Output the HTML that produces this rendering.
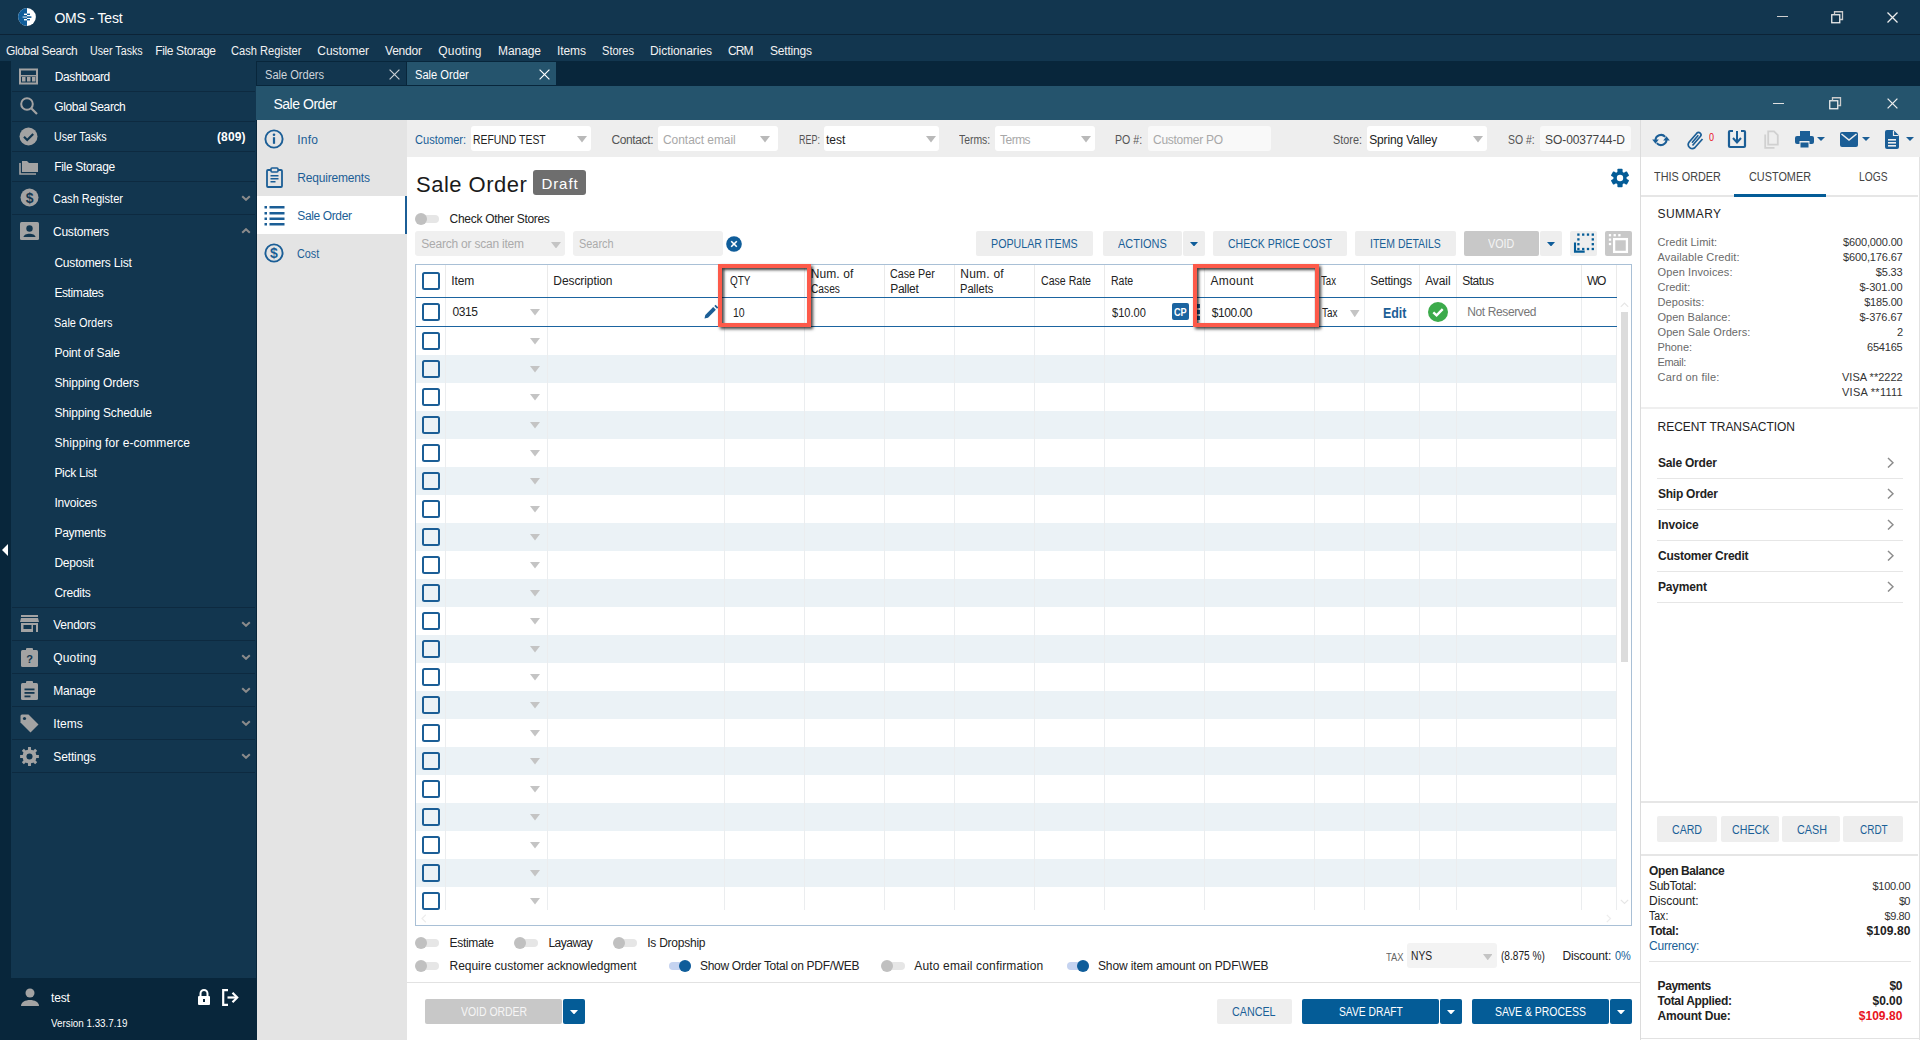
<!DOCTYPE html><html><head><meta charset="utf-8"><style>
*{margin:0;padding:0;box-sizing:border-box}
html,body{width:1920px;height:1040px;overflow:hidden;background:#fff;font-family:"Liberation Sans",sans-serif}
.r{position:absolute}
.t{position:absolute;white-space:nowrap;line-height:20px}
</style></head><body>
<div class="r" style="left:0px;top:0px;width:1920px;height:34px;background:#12364f;"></div>
<div class="r" style="left:0px;top:34px;width:1920px;height:1px;background:#0c2336;"></div>
<div class="r" style="left:0px;top:35px;width:1920px;height:26px;background:#12364f;"></div>
<svg class="r" style="left:17px;top:7px;" width="20" height="20" viewBox="0 0 20 20"><circle cx="10" cy="10" r="8.9" fill="#fff"/><path d="M10 1.1 A8.9 8.9 0 0 0 10 18.9 Z" fill="#0f5d9a"/><rect x="7" y="6.6" width="3" height="1.4" fill="#fff"/><rect x="10" y="6.6" width="3" height="1.4" fill="#0f5d9a"/><rect x="5.6" y="9.3" width="4.4" height="1.6" fill="#9dbcd4"/><rect x="10" y="9.3" width="4.4" height="1.6" fill="#0f5d9a"/><rect x="7" y="12" width="3" height="1.4" fill="#fff"/><rect x="10" y="12" width="3" height="1.4" fill="#0f5d9a"/></svg>
<div class="t " style="left:54.40px;top:8px;font-size:14px;color:#fff;font-weight:normal;letter-spacing:-0.172px;">OMS - Test</div>
<div class="r" style="left:1777px;top:16px;width:11px;height:1.3px;background:#cfcfcf;"></div>
<svg class="r" style="left:1831px;top:11px;" width="13" height="13" viewBox="0 0 13 13"><rect x="0.75" y="3.75" width="8" height="8" fill="none" stroke="#eee" stroke-width="1.3"/><path d="M3.5 3.5 V0.75 H11.5 V8.5 H9" fill="none" stroke="#ccc" stroke-width="1.3"/></svg>
<svg class="r" style="left:1887px;top:12px;" width="11" height="11" viewBox="0 0 11 11"><path d="M0.5 0.5 L10.5 10.5 M10.5 0.5 L0.5 10.5" stroke="#eee" stroke-width="1.3"/></svg>
<div class="t " style="left:6.00px;top:41px;font-size:12px;color:#f2f2f2;font-weight:normal;letter-spacing:-0.362px;">Global Search</div>
<div class="t " style="left:90.30px;top:41px;font-size:12px;color:#f2f2f2;font-weight:normal;transform:scaleX(0.8910);transform-origin:0 0;">User Tasks</div>
<div class="t " style="left:155.20px;top:41px;font-size:12px;color:#f2f2f2;font-weight:normal;letter-spacing:-0.355px;">File Storage</div>
<div class="t " style="left:230.50px;top:41px;font-size:12px;color:#f2f2f2;font-weight:normal;transform:scaleX(0.9270);transform-origin:0 0;">Cash Register</div>
<div class="t " style="left:317.30px;top:41px;font-size:12px;color:#f2f2f2;font-weight:normal;letter-spacing:-0.043px;">Customer</div>
<div class="t " style="left:385.00px;top:41px;font-size:12px;color:#f2f2f2;font-weight:normal;letter-spacing:-0.210px;">Vendor</div>
<div class="t " style="left:438.30px;top:41px;font-size:12px;color:#f2f2f2;font-weight:normal;letter-spacing:0.192px;">Quoting</div>
<div class="t " style="left:498.00px;top:41px;font-size:12px;color:#f2f2f2;font-weight:normal;letter-spacing:-0.070px;">Manage</div>
<div class="t " style="left:557.00px;top:41px;font-size:12px;color:#f2f2f2;font-weight:normal;letter-spacing:-0.088px;">Items</div>
<div class="t " style="left:602.00px;top:41px;font-size:12px;color:#f2f2f2;font-weight:normal;transform:scaleX(0.9222);transform-origin:0 0;">Stores</div>
<div class="t " style="left:650.00px;top:41px;font-size:12px;color:#f2f2f2;font-weight:normal;letter-spacing:-0.064px;">Dictionaries</div>
<div class="t " style="left:728.00px;top:41px;font-size:12px;color:#f2f2f2;font-weight:normal;letter-spacing:-0.875px;">CRM</div>
<div class="t " style="left:770.00px;top:41px;font-size:12px;color:#f2f2f2;font-weight:normal;letter-spacing:-0.193px;">Settings</div>
<div class="r" style="left:0px;top:61px;width:11px;height:979px;background:#08263b;"></div>
<svg class="r" style="left:2px;top:544px;" width="6" height="12" viewBox="0 0 6 12"><path d="M6 0 L0 6 L6 12 Z" fill="#fff"/></svg>
<div class="r" style="left:11px;top:61px;width:245px;height:917px;background:#12364f;"></div>
<div class="r" style="left:11px;top:978px;width:245px;height:62px;background:#08263b;"></div>
<div class="r" style="left:12px;top:91px;width:243px;height:1px;background:#0d2a40;"></div>
<div class="t " style="left:54.80px;top:67px;font-size:12px;color:#fff;font-weight:normal;letter-spacing:-0.412px;">Dashboard</div>
<div class="r" style="left:12px;top:121px;width:243px;height:1px;background:#0d2a40;"></div>
<div class="t " style="left:54.30px;top:97px;font-size:12px;color:#fff;font-weight:normal;letter-spacing:-0.379px;">Global Search</div>
<div class="r" style="left:12px;top:151px;width:243px;height:1px;background:#0d2a40;"></div>
<div class="t " style="left:54.30px;top:127px;font-size:12px;color:#fff;font-weight:normal;transform:scaleX(0.8910);transform-origin:0 0;">User Tasks</div>
<div class="r" style="left:12px;top:181px;width:243px;height:1px;background:#0d2a40;"></div>
<div class="t " style="left:54.30px;top:157px;font-size:12px;color:#fff;font-weight:normal;letter-spacing:-0.345px;">File Storage</div>
<div class="r" style="left:12px;top:214px;width:243px;height:1px;background:#0d2a40;"></div>
<div class="t " style="left:53.00px;top:189px;font-size:12px;color:#fff;font-weight:normal;transform:scaleX(0.9204);transform-origin:0 0;">Cash Register</div>
<div class="t " style="left:53.00px;top:222px;font-size:12px;color:#fff;font-weight:normal;letter-spacing:-0.238px;">Customers</div>
<svg class="r" style="left:19px;top:68px;" width="20" height="18" viewBox="0 0 20 18"><rect x="1" y="1.5" width="17" height="14" fill="none" stroke="#a3a3a3" stroke-width="2"/><rect x="3" y="9" width="3.5" height="4.5" fill="#a3a3a3"/><rect x="8" y="9" width="3.5" height="4.5" fill="#a3a3a3"/><rect x="13" y="9" width="3.5" height="4.5" fill="#a3a3a3"/><rect x="2" y="7" width="15" height="1.5" fill="#a3a3a3"/></svg>
<svg class="r" style="left:19px;top:96px;" width="20" height="20" viewBox="0 0 20 20"><circle cx="8" cy="8" r="5.8" fill="none" stroke="#a3a3a3" stroke-width="2"/><path d="M12.2 12.2 L18 18" stroke="#a3a3a3" stroke-width="2.2"/></svg>
<svg class="r" style="left:19px;top:127px;" width="20" height="20" viewBox="0 0 20 20"><circle cx="9.5" cy="9.5" r="9" fill="#a3a3a3"/><path d="M5 9.8 L8.2 13 L14.2 7" fill="none" stroke="#12364f" stroke-width="2.2"/></svg>
<div class="t" style="right:1674.38px;top:127px;font-size:12px;color:#fff;font-weight:bold;letter-spacing:0.125px;">(809)</div>
<svg class="r" style="left:19px;top:158px;" width="20" height="17" viewBox="0 0 20 17"><path d="M3 3 H8 L10 5 H19 V14 H3 Z" fill="#a3a3a3"/><path d="M1 5 V16 H17" fill="none" stroke="#a3a3a3" stroke-width="1.6"/></svg>
<svg class="r" style="left:20px;top:188px;" width="20" height="20" viewBox="0 0 20 20"><circle cx="9.5" cy="9.5" r="9" fill="#a3a3a3"/><text x="9.6" y="15" font-size="14" font-weight="bold" text-anchor="middle" fill="#12364f" font-family="Liberation Sans">$</text></svg>
<svg class="r" style="left:241px;top:195px;" width="10" height="6" viewBox="0 0 10 6"><path d="M1.2 1.2 L5 4.8 L8.8 1.2" fill="none" stroke="#8b8b8b" stroke-width="2"/></svg>
<svg class="r" style="left:20px;top:222px;" width="19" height="19" viewBox="0 0 19 19"><rect x="0" y="0" width="19" height="18" rx="1.5" fill="#a3a3a3"/><circle cx="9.5" cy="6.5" r="3.2" fill="#12364f"/><path d="M3.5 15 C4 10.5 15 10.5 15.5 15 Z" fill="#12364f"/></svg>
<svg class="r" style="left:241px;top:228px;" width="10" height="6" viewBox="0 0 10 6"><path d="M1.2 4.8 L5 1.2 L8.8 4.8" fill="none" stroke="#8b8b8b" stroke-width="2"/></svg>
<div class="t " style="left:54.40px;top:253px;font-size:12px;color:#fff;font-weight:normal;letter-spacing:-0.196px;">Customers List</div>
<div class="t " style="left:54.40px;top:283px;font-size:12px;color:#fff;font-weight:normal;letter-spacing:-0.400px;">Estimates</div>
<div class="t " style="left:54.40px;top:313px;font-size:12px;color:#fff;font-weight:normal;transform:scaleX(0.9118);transform-origin:0 0;">Sale Orders</div>
<div class="t " style="left:54.40px;top:343px;font-size:12px;color:#fff;font-weight:normal;letter-spacing:-0.204px;">Point of Sale</div>
<div class="t " style="left:54.40px;top:373px;font-size:12px;color:#fff;font-weight:normal;letter-spacing:-0.157px;">Shipping Orders</div>
<div class="t " style="left:54.40px;top:403px;font-size:12px;color:#fff;font-weight:normal;letter-spacing:-0.156px;">Shipping Schedule</div>
<div class="t " style="left:54.40px;top:433px;font-size:12px;color:#fff;font-weight:normal;letter-spacing:0.070px;">Shipping for e-commerce</div>
<div class="t " style="left:54.40px;top:463px;font-size:12px;color:#fff;font-weight:normal;letter-spacing:-0.275px;">Pick List</div>
<div class="t " style="left:54.40px;top:493px;font-size:12px;color:#fff;font-weight:normal;letter-spacing:-0.214px;">Invoices</div>
<div class="t " style="left:54.40px;top:523px;font-size:12px;color:#fff;font-weight:normal;letter-spacing:-0.250px;">Payments</div>
<div class="t " style="left:54.40px;top:553px;font-size:12px;color:#fff;font-weight:normal;letter-spacing:-0.217px;">Deposit</div>
<div class="t " style="left:54.40px;top:583px;font-size:12px;color:#fff;font-weight:normal;letter-spacing:-0.267px;">Credits</div>
<div class="r" style="left:12px;top:607px;width:243px;height:1px;background:#0d2a40;"></div>
<div class="r" style="left:12px;top:640px;width:243px;height:1px;background:#0d2a40;"></div>
<div class="t " style="left:53.30px;top:615px;font-size:12px;color:#fff;font-weight:normal;letter-spacing:-0.275px;">Vendors</div>
<svg class="r" style="left:241px;top:620.5px;" width="10" height="6" viewBox="0 0 10 6"><path d="M1.2 1.2 L5 4.8 L8.8 1.2" fill="none" stroke="#8b8b8b" stroke-width="2"/></svg>
<div class="r" style="left:12px;top:673px;width:243px;height:1px;background:#0d2a40;"></div>
<div class="t " style="left:53.30px;top:648px;font-size:12px;color:#fff;font-weight:normal;letter-spacing:0.142px;">Quoting</div>
<svg class="r" style="left:241px;top:653.5px;" width="10" height="6" viewBox="0 0 10 6"><path d="M1.2 1.2 L5 4.8 L8.8 1.2" fill="none" stroke="#8b8b8b" stroke-width="2"/></svg>
<div class="r" style="left:12px;top:706px;width:243px;height:1px;background:#0d2a40;"></div>
<div class="t " style="left:53.30px;top:681px;font-size:12px;color:#fff;font-weight:normal;letter-spacing:-0.190px;">Manage</div>
<svg class="r" style="left:241px;top:686.5px;" width="10" height="6" viewBox="0 0 10 6"><path d="M1.2 1.2 L5 4.8 L8.8 1.2" fill="none" stroke="#8b8b8b" stroke-width="2"/></svg>
<div class="r" style="left:12px;top:739px;width:243px;height:1px;background:#0d2a40;"></div>
<div class="t " style="left:53.30px;top:714px;font-size:12px;color:#fff;font-weight:normal;letter-spacing:0.013px;">Items</div>
<svg class="r" style="left:241px;top:719.5px;" width="10" height="6" viewBox="0 0 10 6"><path d="M1.2 1.2 L5 4.8 L8.8 1.2" fill="none" stroke="#8b8b8b" stroke-width="2"/></svg>
<div class="r" style="left:12px;top:772px;width:243px;height:1px;background:#0d2a40;"></div>
<div class="t " style="left:53.30px;top:747px;font-size:12px;color:#fff;font-weight:normal;letter-spacing:-0.136px;">Settings</div>
<svg class="r" style="left:241px;top:752.5px;" width="10" height="6" viewBox="0 0 10 6"><path d="M1.2 1.2 L5 4.8 L8.8 1.2" fill="none" stroke="#8b8b8b" stroke-width="2"/></svg>
<svg class="r" style="left:20px;top:615px;" width="19" height="18" viewBox="0 0 19 18"><rect x="1" y="0" width="17" height="2" fill="#a3a3a3"/><path d="M1 3 H18 L19 7 H0 Z" fill="#a3a3a3"/><rect x="1" y="8" width="17" height="9" fill="#a3a3a3"/><rect x="3.5" y="10" width="8" height="4" fill="#12364f"/><rect x="13" y="10" width="3" height="7" fill="#12364f"/></svg>
<svg class="r" style="left:21px;top:648px;" width="17" height="19" viewBox="0 0 17 19"><rect x="0" y="2" width="17" height="17" rx="1.5" fill="#a3a3a3"/><rect x="5" y="0" width="7" height="4" rx="1" fill="#a3a3a3"/><text x="8.5" y="15" font-size="11" font-weight="bold" text-anchor="middle" fill="#12364f" font-family="Liberation Sans">?</text></svg>
<svg class="r" style="left:21px;top:681px;" width="17" height="19" viewBox="0 0 17 19"><rect x="0" y="2" width="17" height="17" rx="1.5" fill="#a3a3a3"/><rect x="5" y="0" width="7" height="4" rx="1" fill="#a3a3a3"/><rect x="3.5" y="7.5" width="10" height="1.8" fill="#12364f"/><rect x="3.5" y="11" width="10" height="1.8" fill="#12364f"/><rect x="3.5" y="14.5" width="6" height="1.8" fill="#12364f"/></svg>
<svg class="r" style="left:20px;top:714px;" width="19" height="19" viewBox="0 0 19 19"><path d="M2 0.5 H8.5 L18.5 10.5 L10.5 18.5 L0.5 8.5 V2 Q0.5 0.5 2 0.5 Z" fill="#a3a3a3"/><circle cx="4.5" cy="4.5" r="1.6" fill="#12364f"/></svg>
<svg class="r" style="left:20px;top:747px;" width="19" height="19" viewBox="0 0 19 19"><path d="M16.36 7.97 L18.89 8.08 L18.89 10.92 L16.36 11.03 L15.44 13.27 L17.15 15.14 L15.14 17.15 L13.27 15.44 L11.03 16.36 L10.92 18.89 L8.08 18.89 L7.97 16.36 L5.73 15.44 L3.86 17.15 L1.85 15.14 L3.56 13.27 L2.64 11.03 L0.11 10.92 L0.11 8.08 L2.64 7.97 L3.56 5.73 L1.85 3.86 L3.86 1.85 L5.73 3.56 L7.97 2.64 L8.08 0.11 L10.92 0.11 L11.03 2.64 L13.27 3.56 L15.14 1.85 L17.15 3.86 L15.44 5.73 Z" fill="#a3a3a3"/><circle cx="9.5" cy="9.5" r="6.84" fill="#a3a3a3"/><circle cx="9.5" cy="9.5" r="3.04" fill="#12364f"/></svg>
<svg class="r" style="left:21px;top:988px;" width="18" height="18" viewBox="0 0 18 18"><circle cx="9" cy="5" r="4.5" fill="#a3a3a3"/><path d="M0 18 C0 10 18 10 18 18 Z" fill="#a3a3a3"/></svg>
<div class="t " style="left:51.00px;top:988px;font-size:12px;color:#fff;font-weight:normal;letter-spacing:-0.183px;">test</div>
<svg class="r" style="left:197px;top:989px;" width="14" height="17" viewBox="0 0 14 17"><path d="M3.5 7 V4.5 A3.5 3.5 0 0 1 10.5 4.5 V7" fill="none" stroke="#fff" stroke-width="2"/><rect x="1" y="7" width="12" height="9" rx="1" fill="#fff"/><rect x="6" y="10" width="2" height="3" fill="#08263b"/></svg>
<svg class="r" style="left:222px;top:989px;" width="17" height="17" viewBox="0 0 17 17"><path d="M6 1.2 H1.2 V15.8 H6" fill="none" stroke="#fff" stroke-width="2.2"/><path d="M5.5 8.5 H14.5" stroke="#fff" stroke-width="2.2"/><path d="M10.5 3.8 L15.2 8.5 L10.5 13.2" fill="none" stroke="#fff" stroke-width="2.2"/></svg>
<div class="t " style="left:51.00px;top:1013px;font-size:11px;color:#fff;font-weight:normal;transform:scaleX(0.8925);transform-origin:0 0;">Version 1.33.7.19</div>
<div class="r" style="left:256px;top:61px;width:1664px;height:25px;background:#08263b;"></div>
<div class="r" style="left:257px;top:62px;width:149px;height:23px;background:#12364f;"></div>
<div class="t " style="left:264.90px;top:65px;font-size:12px;color:#cfd5db;font-weight:normal;transform:scaleX(0.9227);transform-origin:0 0;">Sale Orders</div>
<svg class="r" style="left:389px;top:69px;" width="11" height="11" viewBox="0 0 11 11"><path d="M0.6 0.6 L10.4 10.4 M10.4 0.6 L0.6 10.4" stroke="#c8ced4" stroke-width="1.2"/></svg>
<div class="r" style="left:407px;top:62px;width:149px;height:23px;background:#25546d;"></div>
<div class="t " style="left:415.10px;top:65px;font-size:12px;color:#fff;font-weight:normal;transform:scaleX(0.9268);transform-origin:0 0;">Sale Order</div>
<svg class="r" style="left:539px;top:69px;" width="11" height="11" viewBox="0 0 11 11"><path d="M0.6 0.6 L10.4 10.4 M10.4 0.6 L0.6 10.4" stroke="#fff" stroke-width="1.2"/></svg>
<div class="r" style="left:256px;top:86px;width:1664px;height:34px;background:#25546d;"></div>
<div class="t " style="left:273.40px;top:94px;font-size:14px;color:#fff;font-weight:normal;letter-spacing:-0.467px;">Sale Order</div>
<div class="r" style="left:1773px;top:102.5px;width:11px;height:1.2px;background:#e0e0e0;"></div>
<svg class="r" style="left:1829px;top:97px;" width="13" height="13" viewBox="0 0 13 13"><rect x="0.75" y="3.75" width="8" height="8" fill="none" stroke="#eee" stroke-width="1.3"/><path d="M3.5 3.5 V0.75 H11.5 V8.5 H9" fill="none" stroke="#ccc" stroke-width="1.3"/></svg>
<svg class="r" style="left:1887px;top:98px;" width="11" height="11" viewBox="0 0 11 11"><path d="M0.6 0.6 L10.4 10.4 M10.4 0.6 L0.6 10.4" stroke="#eee" stroke-width="1.3"/></svg>
<div class="r" style="left:256px;top:120px;width:1px;height:920px;background:#08263b;"></div>
<div class="r" style="left:257px;top:120px;width:150px;height:920px;background:#e4e4e4;"></div>
<div class="r" style="left:257px;top:196px;width:148px;height:38px;background:#fff;"></div>
<div class="r" style="left:405px;top:196px;width:2px;height:38px;background:#1b5e96;"></div>
<svg class="r" style="left:264px;top:129px;" width="20" height="20" viewBox="0 0 20 20"><circle cx="10" cy="10" r="8.6" fill="none" stroke="#1b5e96" stroke-width="1.9"/><circle cx="10" cy="5.8" r="1.3" fill="#1b5e96"/><rect x="8.9" y="8.2" width="2.2" height="6.6" fill="#1b5e96"/></svg>
<div class="t " style="left:297.30px;top:130px;font-size:12px;color:#1b5e96;font-weight:normal;letter-spacing:0.233px;">Info</div>
<svg class="r" style="left:266px;top:167px;" width="17" height="21" viewBox="0 0 17 21"><path d="M5 3 H2 Q1 3 1 4 V19 Q1 20 2 20 H15 Q16 20 16 19 V4 Q16 3 15 3 H12" fill="none" stroke="#1b5e96" stroke-width="1.8"/><rect x="5" y="1" width="7" height="4" rx="1" fill="none" stroke="#1b5e96" stroke-width="1.6"/><rect x="4.5" y="8" width="8" height="1.5" fill="#1b5e96"/><rect x="4.5" y="11" width="8" height="1.5" fill="#1b5e96"/><rect x="4.5" y="14" width="5" height="1.5" fill="#1b5e96"/></svg>
<div class="t " style="left:297.30px;top:168px;font-size:12px;color:#1b5e96;font-weight:normal;letter-spacing:-0.182px;">Requirements</div>
<svg class="r" style="left:264px;top:205px;" width="22" height="21" viewBox="0 0 22 21"><rect x="0.5" y="1" width="2.5" height="2.5" fill="#1b5e96"/><rect x="5.5" y="1" width="15" height="2.5" fill="#1b5e96"/><rect x="0.5" y="7" width="2.5" height="2.5" fill="#1b5e96"/><rect x="5.5" y="7" width="15" height="2.5" fill="#1b5e96"/><rect x="0.5" y="12.5" width="2.5" height="2.5" fill="#1b5e96"/><rect x="5.5" y="12.5" width="15" height="2.5" fill="#1b5e96"/><rect x="0.5" y="18" width="2.5" height="2.5" fill="#1b5e96"/><rect x="5.5" y="18" width="15" height="2.5" fill="#1b5e96"/></svg>
<div class="t " style="left:297.30px;top:206px;font-size:12px;color:#1b5e96;font-weight:normal;letter-spacing:-0.372px;">Sale Order</div>
<svg class="r" style="left:264px;top:243px;" width="20" height="20" viewBox="0 0 20 20"><circle cx="10" cy="10" r="8.6" fill="none" stroke="#1b5e96" stroke-width="1.9"/><text x="10" y="15" font-size="14" font-weight="bold" text-anchor="middle" fill="#1b5e96" font-family="Liberation Sans">$</text></svg>
<div class="t " style="left:297.30px;top:244px;font-size:12px;color:#1b5e96;font-weight:normal;transform:scaleX(0.9028);transform-origin:0 0;">Cost</div>
<div class="r" style="left:407px;top:120px;width:1233px;height:37px;background:#eeeeee;"></div>
<div class="t " style="left:415.30px;top:130px;font-size:12px;color:#1a5f97;font-weight:normal;transform:scaleX(0.9232);transform-origin:0 0;">Customer:</div>
<div class="r" style="left:471px;top:126px;width:120px;height:25px;background:#fff;border-radius:3px"></div>
<div class="t " style="left:473.30px;top:130px;font-size:12px;color:#222;font-weight:normal;transform:scaleX(0.8675);transform-origin:0 0;">REFUND TEST</div>
<svg class="r" style="left:577.3px;top:136px;" width="10" height="6.5" viewBox="0 0 10 6.5"><path d="M0 0 H10 L5 6.5 Z" fill="#b9b9b9"/></svg>
<div class="t " style="left:611.50px;top:130px;font-size:12px;color:#555555;font-weight:normal;letter-spacing:-0.386px;">Contact:</div>
<div class="r" style="left:658px;top:126px;width:120px;height:25px;background:#fff;border-radius:3px"></div>
<div class="t " style="left:663.00px;top:130px;font-size:12px;color:#a8a8a8;font-weight:normal;letter-spacing:-0.054px;">Contact email</div>
<svg class="r" style="left:760.4px;top:136px;" width="10" height="6.5" viewBox="0 0 10 6.5"><path d="M0 0 H10 L5 6.5 Z" fill="#b9b9b9"/></svg>
<div class="t " style="left:798.50px;top:130px;font-size:12px;color:#555555;font-weight:normal;transform:scaleX(0.7464);transform-origin:0 0;">REP:</div>
<div class="r" style="left:824px;top:126px;width:115px;height:25px;background:#fff;border-radius:3px"></div>
<div class="t " style="left:826.00px;top:130px;font-size:12px;color:#222;font-weight:normal;letter-spacing:0.017px;">test</div>
<svg class="r" style="left:925.6px;top:136px;" width="10" height="6.5" viewBox="0 0 10 6.5"><path d="M0 0 H10 L5 6.5 Z" fill="#b9b9b9"/></svg>
<div class="t " style="left:959.00px;top:130px;font-size:12px;color:#555555;font-weight:normal;transform:scaleX(0.8667);transform-origin:0 0;">Terms:</div>
<div class="r" style="left:995px;top:126px;width:100px;height:25px;background:#fff;border-radius:3px"></div>
<div class="t " style="left:1000.00px;top:130px;font-size:12px;color:#a8a8a8;font-weight:normal;letter-spacing:-0.513px;">Terms</div>
<svg class="r" style="left:1081px;top:136px;" width="10" height="6.5" viewBox="0 0 10 6.5"><path d="M0 0 H10 L5 6.5 Z" fill="#b9b9b9"/></svg>
<div class="t " style="left:1115.20px;top:130px;font-size:12px;color:#555555;font-weight:normal;transform:scaleX(0.8827);transform-origin:0 0;">PO #:</div>
<div class="r" style="left:1148px;top:126px;width:123px;height:25px;background:#f9f9f9;border-radius:3px"></div>
<div class="t " style="left:1153.00px;top:130px;font-size:12px;color:#a8a8a8;font-weight:normal;letter-spacing:-0.270px;">Customer PO</div>
<div class="t " style="left:1333.30px;top:130px;font-size:12px;color:#555555;font-weight:normal;transform:scaleX(0.9031);transform-origin:0 0;">Store:</div>
<div class="r" style="left:1367px;top:126px;width:120px;height:25px;background:#fff;border-radius:3px"></div>
<div class="t " style="left:1369.20px;top:130px;font-size:12px;color:#222;font-weight:normal;letter-spacing:-0.150px;">Spring Valley</div>
<svg class="r" style="left:1473.3px;top:136px;" width="10" height="6.5" viewBox="0 0 10 6.5"><path d="M0 0 H10 L5 6.5 Z" fill="#b9b9b9"/></svg>
<div class="t " style="left:1507.50px;top:130px;font-size:12px;color:#555555;font-weight:normal;transform:scaleX(0.8697);transform-origin:0 0;">SO #:</div>
<div class="r" style="left:1540px;top:126px;width:91px;height:25px;background:#f9f9f9;border-radius:3px"></div>
<div class="t " style="left:1545.00px;top:130px;font-size:12px;color:#444;font-weight:normal;letter-spacing:-0.064px;">SO-0037744-D</div>
<div class="t " style="left:416.00px;top:175px;font-size:22px;color:#1a1a1a;font-weight:normal;letter-spacing:0.489px;">Sale Order</div>
<div class="r" style="left:533px;top:170px;width:53px;height:25px;background:#6e6e6e;border-radius:3px"></div>
<div class="t " style="left:541.40px;top:174px;font-size:15px;color:#fff;font-weight:normal;letter-spacing:0.950px;">Draft</div>
<svg class="r" style="left:1610px;top:168px;" width="20" height="20" viewBox="0 0 20 20"><g transform="translate(10 10)" fill="#045c97"><rect x="-2.6" y="-9.2" width="5.2" height="5" rx="0.8" transform="rotate(0)"/><rect x="-2.6" y="-9.2" width="5.2" height="5" rx="0.8" transform="rotate(60)"/><rect x="-2.6" y="-9.2" width="5.2" height="5" rx="0.8" transform="rotate(120)"/><rect x="-2.6" y="-9.2" width="5.2" height="5" rx="0.8" transform="rotate(180)"/><rect x="-2.6" y="-9.2" width="5.2" height="5" rx="0.8" transform="rotate(240)"/><rect x="-2.6" y="-9.2" width="5.2" height="5" rx="0.8" transform="rotate(300)"/><circle r="6.6"/></g><circle cx="10" cy="10" r="3.2" fill="#fff"/></svg>
<div class="r" style="left:416px;top:214.5px;width:23px;height:8px;background:#e6e6e6;border-radius:4px"></div>
<div class="r" style="left:415px;top:212.5px;width:12px;height:12px;border-radius:50%;background:#c0c0c0"></div>
<div class="t " style="left:449.60px;top:209px;font-size:12px;color:#222;font-weight:normal;letter-spacing:-0.300px;">Check Other Stores</div>
<div class="r" style="left:415px;top:231px;width:150px;height:25px;background:#f0f0f0;border-radius:3px"></div>
<div class="t " style="left:421.30px;top:234px;font-size:12px;color:#ababab;font-weight:normal;letter-spacing:-0.222px;">Search or scan item</div>
<svg class="r" style="left:550.5px;top:241.5px;" width="10" height="6.5" viewBox="0 0 10 6.5"><path d="M0 0 H10 L5 6.5 Z" fill="#c4c4c4"/></svg>
<div class="r" style="left:573px;top:231px;width:150px;height:25px;background:#f0f0f0;border-radius:3px"></div>
<div class="t " style="left:579.40px;top:234px;font-size:12px;color:#ababab;font-weight:normal;transform:scaleX(0.9105);transform-origin:0 0;">Search</div>
<svg class="r" style="left:726.3px;top:235.8px;" width="16" height="16" viewBox="0 0 16 16"><circle cx="8" cy="8" r="7.8" fill="#0f5d9a"/><path d="M5.2 5.2 L10.8 10.8 M10.8 5.2 L5.2 10.8" stroke="#fff" stroke-width="1.6"/></svg>
<div class="r" style="left:976px;top:231px;width:117px;height:25px;background:#eeeeee;border-radius:2px"></div>
<div class="t " style="left:991.30px;top:234px;font-size:12px;color:#1a5f97;font-weight:normal;transform:scaleX(0.8906);transform-origin:0 0;">POPULAR ITEMS</div>
<div class="r" style="left:1103px;top:231px;width:79px;height:25px;background:#eeeeee;border-radius:2px"></div>
<div class="t " style="left:1118.30px;top:234px;font-size:12px;color:#1a5f97;font-weight:normal;transform:scaleX(0.9128);transform-origin:0 0;">ACTIONS</div>
<div class="r" style="left:1183px;top:231px;width:22px;height:25px;background:#eeeeee;border-radius:2px"></div>
<svg class="r" style="left:1190px;top:241.5px;" width="8" height="4.5" viewBox="0 0 8 4.5"><path d="M0 0 H8 L4.0 4.5 Z" fill="#0f5d9a"/></svg>
<div class="r" style="left:1213px;top:231px;width:134px;height:25px;background:#eeeeee;border-radius:2px"></div>
<div class="t " style="left:1228.30px;top:234px;font-size:12px;color:#1a5f97;font-weight:normal;transform:scaleX(0.8762);transform-origin:0 0;">CHECK PRICE COST</div>
<div class="r" style="left:1355px;top:231px;width:101px;height:25px;background:#eeeeee;border-radius:2px"></div>
<div class="t " style="left:1370.20px;top:234px;font-size:12px;color:#1a5f97;font-weight:normal;transform:scaleX(0.8725);transform-origin:0 0;">ITEM DETAILS</div>
<div class="r" style="left:1464px;top:231px;width:75px;height:25px;background:#c8c8c8;border-radius:2px"></div>
<div class="t " style="left:1488.30px;top:234px;font-size:12px;color:#f4f4f4;font-weight:normal;transform:scaleX(0.8961);transform-origin:0 0;">VOID</div>
<div class="r" style="left:1540px;top:231px;width:22px;height:25px;background:#eeeeee;border-radius:2px"></div>
<svg class="r" style="left:1547px;top:241.5px;" width="8" height="4.5" viewBox="0 0 8 4.5"><path d="M0 0 H8 L4.0 4.5 Z" fill="#0f5d9a"/></svg>
<div class="r" style="left:1570px;top:231px;width:27px;height:25px;background:#eeeeee;border-radius:2px"></div>
<svg class="r" style="left:1570px;top:231px;" width="27" height="25" viewBox="0 0 27 25"><rect x="7.25" y="2.45" width="2.3" height="2.3" fill="#045c97"/><rect x="12.05" y="2.45" width="2.3" height="2.3" fill="#045c97"/><rect x="16.85" y="2.45" width="2.3" height="2.3" fill="#045c97"/><rect x="21.65" y="2.45" width="2.3" height="2.3" fill="#045c97"/><rect x="7.25" y="16.85" width="2.3" height="2.3" fill="#045c97"/><rect x="12.05" y="16.85" width="2.3" height="2.3" fill="#045c97"/><rect x="16.85" y="16.85" width="2.3" height="2.3" fill="#045c97"/><rect x="21.65" y="16.85" width="2.3" height="2.3" fill="#045c97"/><rect x="7.25" y="7.25" width="2.3" height="2.3" fill="#045c97"/><rect x="7.25" y="12.05" width="2.3" height="2.3" fill="#045c97"/><rect x="21.65" y="7.25" width="2.3" height="2.3" fill="#045c97"/><rect x="21.65" y="12.05" width="2.3" height="2.3" fill="#045c97"/><path d="M5 11.400000000000006 V20.599999999999994 H14.700000000000045" fill="none" stroke="#045c97" stroke-width="2.1"/></svg>
<div class="r" style="left:1605px;top:231px;width:27px;height:25px;background:#c8c8c8;border-radius:2px"></div>
<svg class="r" style="left:1605px;top:231px;" width="27" height="25" viewBox="0 0 27 25"><rect x="3.85" y="3.05" width="2.3" height="2.3" fill="#fff"/><rect x="8.55" y="3.05" width="2.3" height="2.3" fill="#fff"/><rect x="13.25" y="3.05" width="2.3" height="2.3" fill="#fff"/><rect x="3.85" y="7.45" width="2.3" height="2.3" fill="#fff"/><rect x="3.85" y="11.85" width="2.3" height="2.3" fill="#fff"/><rect x="9.099999999999909" y="8.099999999999994" width="12.8" height="12.8" fill="none" stroke="#fff" stroke-width="2.3"/></svg>
<div class="r" style="left:415px;top:264px;width:1217px;height:662px;background:#fff;border:1px solid #a9c0d6"></div>
<div class="r" style="left:416px;top:355px;width:1200px;height:28px;background:#ebf2f6;"></div>
<div class="r" style="left:416px;top:411px;width:1200px;height:28px;background:#ebf2f6;"></div>
<div class="r" style="left:416px;top:467px;width:1200px;height:28px;background:#ebf2f6;"></div>
<div class="r" style="left:416px;top:523px;width:1200px;height:28px;background:#ebf2f6;"></div>
<div class="r" style="left:416px;top:579px;width:1200px;height:28px;background:#ebf2f6;"></div>
<div class="r" style="left:416px;top:635px;width:1200px;height:28px;background:#ebf2f6;"></div>
<div class="r" style="left:416px;top:691px;width:1200px;height:28px;background:#ebf2f6;"></div>
<div class="r" style="left:416px;top:747px;width:1200px;height:28px;background:#ebf2f6;"></div>
<div class="r" style="left:416px;top:803px;width:1200px;height:28px;background:#ebf2f6;"></div>
<div class="r" style="left:416px;top:859px;width:1200px;height:28px;background:#ebf2f6;"></div>
<div class="r" style="left:445px;top:265px;width:1px;height:32px;background:#eaeaea;"></div>
<div class="r" style="left:445px;top:298px;width:1px;height:612px;background:#ebedef;"></div>
<div class="r" style="left:547px;top:265px;width:1px;height:32px;background:#eaeaea;"></div>
<div class="r" style="left:547px;top:298px;width:1px;height:612px;background:#ebedef;"></div>
<div class="r" style="left:724px;top:265px;width:1px;height:32px;background:#eaeaea;"></div>
<div class="r" style="left:724px;top:298px;width:1px;height:612px;background:#ebedef;"></div>
<div class="r" style="left:804px;top:265px;width:1px;height:32px;background:#eaeaea;"></div>
<div class="r" style="left:804px;top:298px;width:1px;height:612px;background:#ebedef;"></div>
<div class="r" style="left:884px;top:265px;width:1px;height:32px;background:#eaeaea;"></div>
<div class="r" style="left:884px;top:298px;width:1px;height:612px;background:#ebedef;"></div>
<div class="r" style="left:954px;top:265px;width:1px;height:32px;background:#eaeaea;"></div>
<div class="r" style="left:954px;top:298px;width:1px;height:612px;background:#ebedef;"></div>
<div class="r" style="left:1034px;top:265px;width:1px;height:32px;background:#eaeaea;"></div>
<div class="r" style="left:1034px;top:298px;width:1px;height:612px;background:#ebedef;"></div>
<div class="r" style="left:1104px;top:265px;width:1px;height:32px;background:#eaeaea;"></div>
<div class="r" style="left:1104px;top:298px;width:1px;height:612px;background:#ebedef;"></div>
<div class="r" style="left:1204px;top:265px;width:1px;height:32px;background:#eaeaea;"></div>
<div class="r" style="left:1204px;top:298px;width:1px;height:612px;background:#ebedef;"></div>
<div class="r" style="left:1314px;top:265px;width:1px;height:32px;background:#eaeaea;"></div>
<div class="r" style="left:1314px;top:298px;width:1px;height:612px;background:#ebedef;"></div>
<div class="r" style="left:1364px;top:265px;width:1px;height:32px;background:#eaeaea;"></div>
<div class="r" style="left:1364px;top:298px;width:1px;height:612px;background:#ebedef;"></div>
<div class="r" style="left:1419px;top:265px;width:1px;height:32px;background:#eaeaea;"></div>
<div class="r" style="left:1419px;top:298px;width:1px;height:612px;background:#ebedef;"></div>
<div class="r" style="left:1456px;top:265px;width:1px;height:32px;background:#eaeaea;"></div>
<div class="r" style="left:1456px;top:298px;width:1px;height:612px;background:#ebedef;"></div>
<div class="r" style="left:1581px;top:265px;width:1px;height:32px;background:#eaeaea;"></div>
<div class="r" style="left:1581px;top:298px;width:1px;height:612px;background:#ebedef;"></div>
<div class="r" style="left:1616px;top:265px;width:1px;height:32px;background:#eaeaea;"></div>
<div class="r" style="left:1616px;top:298px;width:1px;height:612px;background:#ebedef;"></div>
<div class="r" style="left:416px;top:297px;width:1201px;height:1px;background:#1b64a0;"></div>
<div class="r" style="left:416px;top:326px;width:1201px;height:1px;background:#1b64a0;"></div>
<div class="r" style="left:1620.5px;top:311.5px;width:7px;height:350px;background:#dcdcdc;"></div>
<svg class="r" style="left:1619.5px;top:301.5px;" width="9" height="5.5" viewBox="0 0 9 5.5"><path d="M0.8 4.8 L4.5 1 L8.2 4.8" fill="none" stroke="#e6e6e6" stroke-width="1.2"/></svg>
<svg class="r" style="left:1619.5px;top:899px;" width="9" height="5.5" viewBox="0 0 9 5.5"><path d="M0.8 0.8 L4.5 4.5 L8.2 0.8" fill="none" stroke="#e6e6e6" stroke-width="1.2"/></svg>
<svg class="r" style="left:421px;top:913.5px;" width="5.5" height="9" viewBox="0 0 5.5 9"><path d="M4.8 0.8 L1 4.5 L4.8 8.2" fill="none" stroke="#ededed" stroke-width="1.2"/></svg>
<svg class="r" style="left:1606px;top:913.5px;" width="5.5" height="9" viewBox="0 0 5.5 9"><path d="M0.8 0.8 L4.5 4.5 L0.8 8.2" fill="none" stroke="#ededed" stroke-width="1.2"/></svg>
<div class="r" style="left:422px;top:272.3px;width:18px;height:17.5px;background:transparent;border:2px solid #1b5e96;border-radius:2.5px"></div>
<div class="r" style="left:422px;top:303.3px;width:18px;height:17.5px;background:transparent;border:2px solid #1b5e96;border-radius:2.5px"></div>
<svg class="r" style="left:530px;top:309px;" width="10" height="6.5" viewBox="0 0 10 6.5"><path d="M0 0 H10 L5 6.5 Z" fill="#c4c4c4"/></svg>
<div class="r" style="left:422px;top:332.0px;width:18px;height:17.5px;background:transparent;border:2px solid #1b5e96;border-radius:2.5px"></div>
<svg class="r" style="left:530px;top:338px;" width="10" height="6.5" viewBox="0 0 10 6.5"><path d="M0 0 H10 L5 6.5 Z" fill="#c4c4c4"/></svg>
<div class="r" style="left:422px;top:360.0px;width:18px;height:17.5px;background:transparent;border:2px solid #1b5e96;border-radius:2.5px"></div>
<svg class="r" style="left:530px;top:366px;" width="10" height="6.5" viewBox="0 0 10 6.5"><path d="M0 0 H10 L5 6.5 Z" fill="#c4c4c4"/></svg>
<div class="r" style="left:422px;top:388.0px;width:18px;height:17.5px;background:transparent;border:2px solid #1b5e96;border-radius:2.5px"></div>
<svg class="r" style="left:530px;top:394px;" width="10" height="6.5" viewBox="0 0 10 6.5"><path d="M0 0 H10 L5 6.5 Z" fill="#c4c4c4"/></svg>
<div class="r" style="left:422px;top:416.0px;width:18px;height:17.5px;background:transparent;border:2px solid #1b5e96;border-radius:2.5px"></div>
<svg class="r" style="left:530px;top:422px;" width="10" height="6.5" viewBox="0 0 10 6.5"><path d="M0 0 H10 L5 6.5 Z" fill="#c4c4c4"/></svg>
<div class="r" style="left:422px;top:444.0px;width:18px;height:17.5px;background:transparent;border:2px solid #1b5e96;border-radius:2.5px"></div>
<svg class="r" style="left:530px;top:450px;" width="10" height="6.5" viewBox="0 0 10 6.5"><path d="M0 0 H10 L5 6.5 Z" fill="#c4c4c4"/></svg>
<div class="r" style="left:422px;top:472.0px;width:18px;height:17.5px;background:transparent;border:2px solid #1b5e96;border-radius:2.5px"></div>
<svg class="r" style="left:530px;top:478px;" width="10" height="6.5" viewBox="0 0 10 6.5"><path d="M0 0 H10 L5 6.5 Z" fill="#c4c4c4"/></svg>
<div class="r" style="left:422px;top:500.0px;width:18px;height:17.5px;background:transparent;border:2px solid #1b5e96;border-radius:2.5px"></div>
<svg class="r" style="left:530px;top:506px;" width="10" height="6.5" viewBox="0 0 10 6.5"><path d="M0 0 H10 L5 6.5 Z" fill="#c4c4c4"/></svg>
<div class="r" style="left:422px;top:528.0px;width:18px;height:17.5px;background:transparent;border:2px solid #1b5e96;border-radius:2.5px"></div>
<svg class="r" style="left:530px;top:534px;" width="10" height="6.5" viewBox="0 0 10 6.5"><path d="M0 0 H10 L5 6.5 Z" fill="#c4c4c4"/></svg>
<div class="r" style="left:422px;top:556.0px;width:18px;height:17.5px;background:transparent;border:2px solid #1b5e96;border-radius:2.5px"></div>
<svg class="r" style="left:530px;top:562px;" width="10" height="6.5" viewBox="0 0 10 6.5"><path d="M0 0 H10 L5 6.5 Z" fill="#c4c4c4"/></svg>
<div class="r" style="left:422px;top:584.0px;width:18px;height:17.5px;background:transparent;border:2px solid #1b5e96;border-radius:2.5px"></div>
<svg class="r" style="left:530px;top:590px;" width="10" height="6.5" viewBox="0 0 10 6.5"><path d="M0 0 H10 L5 6.5 Z" fill="#c4c4c4"/></svg>
<div class="r" style="left:422px;top:612.0px;width:18px;height:17.5px;background:transparent;border:2px solid #1b5e96;border-radius:2.5px"></div>
<svg class="r" style="left:530px;top:618px;" width="10" height="6.5" viewBox="0 0 10 6.5"><path d="M0 0 H10 L5 6.5 Z" fill="#c4c4c4"/></svg>
<div class="r" style="left:422px;top:640.0px;width:18px;height:17.5px;background:transparent;border:2px solid #1b5e96;border-radius:2.5px"></div>
<svg class="r" style="left:530px;top:646px;" width="10" height="6.5" viewBox="0 0 10 6.5"><path d="M0 0 H10 L5 6.5 Z" fill="#c4c4c4"/></svg>
<div class="r" style="left:422px;top:668.0px;width:18px;height:17.5px;background:transparent;border:2px solid #1b5e96;border-radius:2.5px"></div>
<svg class="r" style="left:530px;top:674px;" width="10" height="6.5" viewBox="0 0 10 6.5"><path d="M0 0 H10 L5 6.5 Z" fill="#c4c4c4"/></svg>
<div class="r" style="left:422px;top:696.0px;width:18px;height:17.5px;background:transparent;border:2px solid #1b5e96;border-radius:2.5px"></div>
<svg class="r" style="left:530px;top:702px;" width="10" height="6.5" viewBox="0 0 10 6.5"><path d="M0 0 H10 L5 6.5 Z" fill="#c4c4c4"/></svg>
<div class="r" style="left:422px;top:724.0px;width:18px;height:17.5px;background:transparent;border:2px solid #1b5e96;border-radius:2.5px"></div>
<svg class="r" style="left:530px;top:730px;" width="10" height="6.5" viewBox="0 0 10 6.5"><path d="M0 0 H10 L5 6.5 Z" fill="#c4c4c4"/></svg>
<div class="r" style="left:422px;top:752.0px;width:18px;height:17.5px;background:transparent;border:2px solid #1b5e96;border-radius:2.5px"></div>
<svg class="r" style="left:530px;top:758px;" width="10" height="6.5" viewBox="0 0 10 6.5"><path d="M0 0 H10 L5 6.5 Z" fill="#c4c4c4"/></svg>
<div class="r" style="left:422px;top:780.0px;width:18px;height:17.5px;background:transparent;border:2px solid #1b5e96;border-radius:2.5px"></div>
<svg class="r" style="left:530px;top:786px;" width="10" height="6.5" viewBox="0 0 10 6.5"><path d="M0 0 H10 L5 6.5 Z" fill="#c4c4c4"/></svg>
<div class="r" style="left:422px;top:808.0px;width:18px;height:17.5px;background:transparent;border:2px solid #1b5e96;border-radius:2.5px"></div>
<svg class="r" style="left:530px;top:814px;" width="10" height="6.5" viewBox="0 0 10 6.5"><path d="M0 0 H10 L5 6.5 Z" fill="#c4c4c4"/></svg>
<div class="r" style="left:422px;top:836.0px;width:18px;height:17.5px;background:transparent;border:2px solid #1b5e96;border-radius:2.5px"></div>
<svg class="r" style="left:530px;top:842px;" width="10" height="6.5" viewBox="0 0 10 6.5"><path d="M0 0 H10 L5 6.5 Z" fill="#c4c4c4"/></svg>
<div class="r" style="left:422px;top:864.0px;width:18px;height:17.5px;background:transparent;border:2px solid #1b5e96;border-radius:2.5px"></div>
<svg class="r" style="left:530px;top:870px;" width="10" height="6.5" viewBox="0 0 10 6.5"><path d="M0 0 H10 L5 6.5 Z" fill="#c4c4c4"/></svg>
<div class="r" style="left:422px;top:892.0px;width:18px;height:17.5px;background:transparent;border:2px solid #1b5e96;border-radius:2.5px"></div>
<svg class="r" style="left:530px;top:898px;" width="10" height="6.5" viewBox="0 0 10 6.5"><path d="M0 0 H10 L5 6.5 Z" fill="#c4c4c4"/></svg>
<div class="t " style="left:451.30px;top:271px;font-size:12px;color:#222;font-weight:normal;letter-spacing:-0.150px;">Item</div>
<div class="t " style="left:553.30px;top:271px;font-size:12px;color:#222;font-weight:normal;letter-spacing:-0.085px;">Description</div>
<div class="t " style="left:730.30px;top:271px;font-size:12px;color:#222;font-weight:normal;transform:scaleX(0.8316);transform-origin:0 0;">QTY</div>
<div class="t " style="left:810.80px;top:264px;font-size:12px;color:#222;font-weight:normal;letter-spacing:0.067px;">Num. of</div>
<div class="t " style="left:810.80px;top:279px;font-size:12px;color:#222;font-weight:normal;transform:scaleX(0.8500);transform-origin:0 0;">Cases</div>
<div class="t " style="left:890.30px;top:264px;font-size:12px;color:#222;font-weight:normal;transform:scaleX(0.8940);transform-origin:0 0;">Case Per</div>
<div class="t " style="left:890.30px;top:279px;font-size:12px;color:#222;font-weight:normal;letter-spacing:-0.320px;">Pallet</div>
<div class="t " style="left:960.30px;top:264px;font-size:12px;color:#222;font-weight:normal;letter-spacing:0.217px;">Num. of</div>
<div class="t " style="left:960.30px;top:279px;font-size:12px;color:#222;font-weight:normal;transform:scaleX(0.9278);transform-origin:0 0;">Pallets</div>
<div class="t " style="left:1040.80px;top:271px;font-size:12px;color:#222;font-weight:normal;transform:scaleX(0.8818);transform-origin:0 0;">Case Rate</div>
<div class="t " style="left:1110.80px;top:271px;font-size:12px;color:#222;font-weight:normal;transform:scaleX(0.8757);transform-origin:0 0;">Rate</div>
<div class="t " style="left:1210.50px;top:271px;font-size:12px;color:#222;font-weight:normal;letter-spacing:0.290px;">Amount</div>
<div class="t " style="left:1320.80px;top:271px;font-size:12px;color:#222;font-weight:normal;transform:scaleX(0.8021);transform-origin:0 0;">Tax</div>
<div class="t " style="left:1370.20px;top:271px;font-size:12px;color:#222;font-weight:normal;letter-spacing:-0.236px;">Settings</div>
<div class="t " style="left:1425.20px;top:271px;font-size:12px;color:#222;font-weight:normal;letter-spacing:-0.100px;">Avail</div>
<div class="t " style="left:1462.20px;top:271px;font-size:12px;color:#222;font-weight:normal;letter-spacing:-0.460px;">Status</div>
<div class="t " style="left:1586.90px;top:271px;font-size:12px;color:#222;font-weight:normal;letter-spacing:-1.150px;">WO</div>
<div class="t " style="left:452.50px;top:302px;font-size:12px;color:#222;font-weight:normal;letter-spacing:-0.400px;">0315</div>
<svg class="r" style="left:703px;top:304px;" width="16" height="16" viewBox="0 0 16 16"><path d="M1.5 14.5 L2.3 11 L10.2 3.1 L12.9 5.8 L5 13.7 Z" fill="#1b5e96"/><path d="M11.3 2 L12.6 0.7 L15.3 3.4 L14 4.7 Z" fill="#1b5e96"/></svg>
<div class="t " style="left:732.50px;top:303px;font-size:12px;color:#222;font-weight:normal;transform:scaleX(0.8764);transform-origin:0 0;">10</div>
<div class="t " style="left:1112.00px;top:303px;font-size:12px;color:#222;font-weight:normal;transform:scaleX(0.9210);transform-origin:0 0;">$10.00</div>
<div class="r" style="left:1172px;top:302.8px;width:17.2px;height:17.2px;background:#1b64a0;border-radius:2px"></div>
<div class="t " style="left:1174.00px;top:303px;font-size:10px;color:#fff;font-weight:bold;transform:scaleX(0.9137);transform-origin:0 0;">CP</div>
<div class="r" style="left:1196.7px;top:303.5px;width:3px;height:4px;background:#1b5e96;"></div>
<div class="r" style="left:1196.7px;top:309.5px;width:3px;height:4px;background:#1b5e96;"></div>
<div class="r" style="left:1196.7px;top:315.5px;width:3px;height:4px;background:#1b5e96;"></div>
<div class="t " style="left:1211.70px;top:303px;font-size:12px;color:#222;font-weight:normal;letter-spacing:-0.433px;">$100.00</div>
<div class="t " style="left:1322.00px;top:303px;font-size:12px;color:#222;font-weight:normal;transform:scaleX(0.8289);transform-origin:0 0;">Tax</div>
<svg class="r" style="left:1350px;top:309.7px;" width="9.5" height="7.3" viewBox="0 0 9.5 7.3"><path d="M0 0 H9.5 L4.75 7.3 Z" fill="#c4c4c4"/></svg>
<div class="t " style="left:1382.50px;top:303px;font-size:14px;color:#1b5e96;font-weight:bold;transform:scaleX(0.8847);transform-origin:0 0;">Edit</div>
<svg class="r" style="left:1428px;top:301.8px;" width="20" height="20" viewBox="0 0 20 20"><circle cx="10" cy="10" r="10" fill="#3cab4b"/><path d="M5.3 10.3 L8.6 13.4 L14.7 7.2" fill="none" stroke="#fff" stroke-width="2.4"/></svg>
<div class="t " style="left:1467.30px;top:302px;font-size:12px;color:#777;font-weight:normal;letter-spacing:-0.386px;">Not Reserved</div>
<div class="r" style="left:718px;top:264px;width:93px;height:63px;border:4px solid #fd5a4a;box-shadow:2px 2px 3px rgba(0,0,0,0.75), inset 2px 2px 3px rgba(0,0,0,0.75)"></div>
<div class="r" style="left:1193px;top:264px;width:126px;height:63px;border:4px solid #fd5a4a;box-shadow:2px 2px 3px rgba(0,0,0,0.75), inset 2px 2px 3px rgba(0,0,0,0.75)"></div>
<div class="r" style="left:416px;top:938.5px;width:23px;height:8px;background:#e6e6e6;border-radius:4px"></div>
<div class="r" style="left:415px;top:936.5px;width:12px;height:12px;border-radius:50%;background:#c0c0c0"></div>
<div class="t " style="left:449.50px;top:933px;font-size:12px;color:#222;font-weight:normal;letter-spacing:-0.314px;">Estimate</div>
<div class="r" style="left:515px;top:938.5px;width:23px;height:8px;background:#e6e6e6;border-radius:4px"></div>
<div class="r" style="left:514px;top:936.5px;width:12px;height:12px;border-radius:50%;background:#c0c0c0"></div>
<div class="t " style="left:548.40px;top:933px;font-size:12px;color:#222;font-weight:normal;letter-spacing:-0.492px;">Layaway</div>
<div class="r" style="left:614px;top:938.5px;width:23px;height:8px;background:#e6e6e6;border-radius:4px"></div>
<div class="r" style="left:613px;top:936.5px;width:12px;height:12px;border-radius:50%;background:#c0c0c0"></div>
<div class="t " style="left:647.20px;top:933px;font-size:12px;color:#222;font-weight:normal;letter-spacing:-0.240px;">Is Dropship</div>
<div class="r" style="left:416px;top:961.5px;width:23px;height:8px;background:#e6e6e6;border-radius:4px"></div>
<div class="r" style="left:415px;top:959.5px;width:12px;height:12px;border-radius:50%;background:#c0c0c0"></div>
<div class="t " style="left:449.50px;top:956px;font-size:12px;color:#222;font-weight:normal;letter-spacing:-0.030px;">Require customer acknowledgment</div>
<div class="r" style="left:669px;top:961.5px;width:22px;height:8px;background:#c5d3f0;border-radius:4px"></div>
<div class="r" style="left:679px;top:959.5px;width:12px;height:12px;border-radius:50%;background:#0f5d9a"></div>
<div class="t " style="left:700.00px;top:956px;font-size:12px;color:#222;font-weight:normal;letter-spacing:-0.296px;">Show Order Total on PDF/WEB</div>
<div class="r" style="left:881.5px;top:961.5px;width:23px;height:8px;background:#e6e6e6;border-radius:4px"></div>
<div class="r" style="left:880.5px;top:959.5px;width:12px;height:12px;border-radius:50%;background:#c0c0c0"></div>
<div class="t " style="left:914.30px;top:956px;font-size:12px;color:#222;font-weight:normal;letter-spacing:0.159px;">Auto email confirmation</div>
<div class="r" style="left:1067px;top:961.5px;width:22px;height:8px;background:#c5d3f0;border-radius:4px"></div>
<div class="r" style="left:1077px;top:959.5px;width:12px;height:12px;border-radius:50%;background:#0f5d9a"></div>
<div class="t " style="left:1098.00px;top:956px;font-size:12px;color:#222;font-weight:normal;letter-spacing:-0.133px;">Show item amount on PDF\WEB</div>
<div class="t " style="left:1386.20px;top:947px;font-size:11px;color:#666;font-weight:normal;transform:scaleX(0.8544);transform-origin:0 0;">TAX</div>
<div class="r" style="left:1407px;top:943px;width:90px;height:25px;background:#f3f3f3;border-radius:3px"></div>
<div class="t " style="left:1410.50px;top:946px;font-size:12px;color:#222;font-weight:normal;transform:scaleX(0.8560);transform-origin:0 0;">NYS</div>
<svg class="r" style="left:1482.5px;top:953.5px;" width="9.5" height="6.3" viewBox="0 0 9.5 6.3"><path d="M0 0 H9.5 L4.75 6.3 Z" fill="#c4c4c4"/></svg>
<div class="t " style="left:1500.50px;top:946px;font-size:12px;color:#222;font-weight:normal;transform:scaleX(0.8434);transform-origin:0 0;">(8.875 %)</div>
<div class="t " style="left:1562.40px;top:946px;font-size:12px;color:#222;font-weight:normal;letter-spacing:-0.150px;">Discount:</div>
<div class="t " style="left:1615.00px;top:946px;font-size:12px;color:#1a5f97;font-weight:normal;transform:scaleX(0.9164);transform-origin:0 0;">0%</div>
<div class="r" style="left:407px;top:982px;width:1233px;height:1px;background:#e2e2e2;"></div>
<div class="r" style="left:425px;top:999px;width:137px;height:25px;background:#c8c8c8;border-radius:2px"></div>
<div class="t " style="left:460.50px;top:1002px;font-size:12px;color:#f6f6f6;font-weight:normal;transform:scaleX(0.8697);transform-origin:0 0;">VOID ORDER</div>
<div class="r" style="left:563px;top:999px;width:22px;height:25px;background:#045c97;border-radius:2px"></div>
<svg class="r" style="left:570px;top:1009.5px;" width="8" height="4.5" viewBox="0 0 8 4.5"><path d="M0 0 H8 L4.0 4.5 Z" fill="#fff"/></svg>
<div class="r" style="left:1217px;top:999px;width:75px;height:25px;background:#eeeeee;border-radius:2px"></div>
<div class="t " style="left:1232.40px;top:1002px;font-size:12px;color:#1a5f97;font-weight:normal;transform:scaleX(0.8953);transform-origin:0 0;">CANCEL</div>
<div class="r" style="left:1302px;top:999px;width:137px;height:25px;background:#045c97;border-radius:2px"></div>
<div class="t " style="left:1339.20px;top:1002px;font-size:12px;color:#fff;font-weight:normal;transform:scaleX(0.8570);transform-origin:0 0;">SAVE DRAFT</div>
<div class="r" style="left:1440px;top:999px;width:22px;height:25px;background:#045c97;border-radius:2px"></div>
<svg class="r" style="left:1447.2px;top:1009.5px;" width="8" height="4.5" viewBox="0 0 8 4.5"><path d="M0 0 H8 L4.0 4.5 Z" fill="#fff"/></svg>
<div class="r" style="left:1472px;top:999px;width:137px;height:25px;background:#045c97;border-radius:2px"></div>
<div class="t " style="left:1494.90px;top:1002px;font-size:12px;color:#fff;font-weight:normal;transform:scaleX(0.8699);transform-origin:0 0;">SAVE &amp; PROCESS</div>
<div class="r" style="left:1610px;top:999px;width:22px;height:25px;background:#045c97;border-radius:2px"></div>
<svg class="r" style="left:1617px;top:1009.5px;" width="8" height="4.5" viewBox="0 0 8 4.5"><path d="M0 0 H8 L4.0 4.5 Z" fill="#fff"/></svg>
<div class="r" style="left:1640px;top:120px;width:1px;height:920px;background:#dcdcdc;"></div>
<div class="r" style="left:1641px;top:120px;width:279px;height:37px;background:#eeeeee;"></div>
<div class="r" style="left:1919px;top:157px;width:1px;height:883px;background:#e2e2e2;"></div>
<svg class="r" style="left:1652px;top:132.5px;" width="18" height="14" viewBox="0 0 18 14"><path d="M3.5 7.5 A5.5 5.5 0 0 1 13.2 3.9" fill="none" stroke="#1b5e96" stroke-width="2"/><path d="M0.2 6.6 L6.8 6.6 L3.5 10.8 Z" fill="#1b5e96"/><path d="M14.5 6.5 A5.5 5.5 0 0 1 4.8 10.1" fill="none" stroke="#1b5e96" stroke-width="2"/><path d="M11.2 7.4 L17.8 7.4 L14.5 3.2 Z" fill="#1b5e96"/></svg>
<svg class="r" style="left:1686px;top:130px;" width="20" height="20" viewBox="0 0 20 20"><path d="M6.5 15.5 L14.3 6.5 A2.4 2.4 0 0 0 10.8 3.2 L3 12.3 A4 4 0 0 0 9 17.5 L16.5 9" fill="none" stroke="#1b5e96" stroke-width="1.7"/><path d="M12.3 5.3 L6 12.8" fill="none" stroke="#1b5e96" stroke-width="1.7"/></svg>
<div class="t " style="left:1709.00px;top:128px;font-size:10px;color:#e81123;font-weight:normal;transform:scaleX(0.9009);transform-origin:0 0;">0</div>
<svg class="r" style="left:1727px;top:129px;" width="20" height="20" viewBox="0 0 20 20"><path d="M6 2 H3 Q2 2 2 3 V17 Q2 18 3 18 H17 Q18 18 18 17 V3 Q18 2 17 2 H14" fill="none" stroke="#1b5e96" stroke-width="2.2"/><path d="M10 2 V13" stroke="#1b5e96" stroke-width="2"/><path d="M6 9 L10 13.5 L14 9" fill="none" stroke="#1b5e96" stroke-width="2"/></svg>
<svg class="r" style="left:1762px;top:130px;" width="18" height="20" viewBox="0 0 18 20"><path d="M3.2 4.5 V17.8 H12.5" fill="none" stroke="#d0d0d0" stroke-width="1.8"/><path d="M6.2 1.3 H12 L15.8 5.1 V14.7 H6.2 Z" fill="none" stroke="#d0d0d0" stroke-width="1.8"/></svg>
<svg class="r" style="left:1795px;top:130px;" width="20" height="19" viewBox="0 0 20 19"><rect x="5" y="1" width="10" height="5" fill="#1b5e96"/><rect x="0" y="6" width="19" height="8" rx="2" fill="#1b5e96"/><rect x="4.5" y="11" width="10" height="7" fill="#eeeeee"/><rect x="5.5" y="12.5" width="8" height="5" fill="#1b5e96"/></svg>
<svg class="r" style="left:1817px;top:137px;" width="8" height="4" viewBox="0 0 8 4"><path d="M0 0 H8 L4.0 4 Z" fill="#1b5e96"/></svg>
<svg class="r" style="left:1840px;top:132px;" width="18" height="15" viewBox="0 0 18 15"><rect x="0" y="0" width="18" height="15" rx="2" fill="#1b5e96"/><path d="M1.5 2 L9 8 L16.5 2" fill="none" stroke="#eeeeee" stroke-width="1.6"/></svg>
<svg class="r" style="left:1862px;top:137px;" width="8" height="4" viewBox="0 0 8 4"><path d="M0 0 H8 L4.0 4 Z" fill="#1b5e96"/></svg>
<svg class="r" style="left:1885px;top:130px;" width="14" height="19" viewBox="0 0 14 19"><path d="M0 2 Q0 0 2 0 H8.5 L14 5.5 V17 Q14 19 12 19 H2 Q0 19 0 17 Z" fill="#1b5e96"/><path d="M8.5 0.5 V5.5 H13.5" fill="none" stroke="#eeeeee" stroke-width="1.2"/><rect x="3" y="9" width="8" height="1.6" fill="#eeeeee"/><rect x="3" y="12" width="8" height="1.6" fill="#eeeeee"/><rect x="3" y="15" width="8" height="1.6" fill="#eeeeee"/></svg>
<svg class="r" style="left:1906px;top:137px;" width="8" height="4" viewBox="0 0 8 4"><path d="M0 0 H8 L4.0 4 Z" fill="#1b5e96"/></svg>
<div class="t " style="left:1654.10px;top:167px;font-size:12px;color:#444;font-weight:normal;transform:scaleX(0.9041);transform-origin:0 0;">THIS ORDER</div>
<div class="t " style="left:1749.00px;top:167px;font-size:12px;color:#444;font-weight:normal;transform:scaleX(0.9058);transform-origin:0 0;">CUSTOMER</div>
<div class="t " style="left:1858.50px;top:167px;font-size:12px;color:#444;font-weight:normal;transform:scaleX(0.8546);transform-origin:0 0;">LOGS</div>
<div class="r" style="left:1641px;top:195px;width:277px;height:1.5px;background:#e6e6e6;"></div>
<div class="r" style="left:1734px;top:194px;width:92px;height:2.5px;background:#045c97;"></div>
<div class="t " style="left:1657.50px;top:204px;font-size:12px;color:#222;font-weight:normal;letter-spacing:0.400px;">SUMMARY</div>
<div class="t " style="left:1657.50px;top:232px;font-size:11px;color:#6a6a6a;font-weight:normal;letter-spacing:0.075px;">Credit Limit:</div>
<div class="t " style="left:1843.00px;top:232px;font-size:11px;color:#333;font-weight:normal;letter-spacing:-0.145px;">$600,000.00</div>
<div class="t " style="left:1657.50px;top:247px;font-size:11px;color:#6a6a6a;font-weight:normal;letter-spacing:0.137px;">Available Credit:</div>
<div class="t " style="left:1843.00px;top:247px;font-size:11px;color:#333;font-weight:normal;letter-spacing:-0.145px;">$600,176.67</div>
<div class="t " style="left:1657.50px;top:262px;font-size:11px;color:#6a6a6a;font-weight:normal;letter-spacing:0.123px;">Open Invoices:</div>
<div class="t " style="left:1875.80px;top:262px;font-size:11px;color:#333;font-weight:normal;letter-spacing:-0.162px;">$5.33</div>
<div class="t " style="left:1657.50px;top:277px;font-size:11px;color:#6a6a6a;font-weight:normal;letter-spacing:0.050px;">Credit:</div>
<div class="t " style="left:1859.40px;top:277px;font-size:11px;color:#333;font-weight:normal;letter-spacing:-0.021px;">$-301.00</div>
<div class="t " style="left:1657.50px;top:292px;font-size:11px;color:#6a6a6a;font-weight:normal;letter-spacing:0.106px;">Deposits:</div>
<div class="t " style="left:1864.20px;top:292px;font-size:11px;color:#333;font-weight:normal;letter-spacing:-0.208px;">$185.00</div>
<div class="t " style="left:1657.50px;top:307px;font-size:11px;color:#6a6a6a;font-weight:normal;letter-spacing:0.025px;">Open Balance:</div>
<div class="t " style="left:1859.40px;top:307px;font-size:11px;color:#333;font-weight:normal;letter-spacing:-0.021px;">$-376.67</div>
<div class="t " style="left:1657.50px;top:322px;font-size:11px;color:#6a6a6a;font-weight:normal;letter-spacing:0.075px;">Open Sale Orders:</div>
<div class="t " style="left:1897.00px;top:322px;font-size:11px;color:#333;font-weight:normal;letter-spacing:-0.400px;">2</div>
<div class="t " style="left:1657.50px;top:337px;font-size:11px;color:#6a6a6a;font-weight:normal;letter-spacing:-0.070px;">Phone:</div>
<div class="t " style="left:1867.00px;top:337px;font-size:11px;color:#333;font-weight:normal;letter-spacing:-0.200px;">654165</div>
<div class="t " style="left:1657.50px;top:352px;font-size:11px;color:#6a6a6a;font-weight:normal;letter-spacing:-0.350px;">Email:</div>
<div class="t " style="left:1657.50px;top:367px;font-size:11px;color:#6a6a6a;font-weight:normal;letter-spacing:0.217px;">Card on file:</div>
<div class="t " style="left:1842.00px;top:367px;font-size:11px;color:#333;font-weight:normal;letter-spacing:0.015px;">VISA **2222</div>
<div class="t " style="left:1842.00px;top:382px;font-size:11px;color:#333;font-weight:normal;letter-spacing:0.260px;">VISA **1111</div>
<div class="r" style="left:1641px;top:407px;width:277px;height:2px;background:#efefef;"></div>
<div class="t " style="left:1657.60px;top:417px;font-size:12px;color:#222;font-weight:normal;letter-spacing:-0.050px;">RECENT TRANSACTION</div>
<div class="t " style="left:1658.00px;top:453px;font-size:12px;color:#222;font-weight:bold;letter-spacing:-0.211px;">Sale Order</div>
<svg class="r" style="left:1886.5px;top:456.5px;" width="7.5" height="11.5" viewBox="0 0 7.5 11.5"><path d="M1 1 L6 5.75 L1 10.5" fill="none" stroke="#8c8c8c" stroke-width="1.5"/></svg>
<div class="r" style="left:1657px;top:478px;width:246px;height:1px;background:#e6e6e6;"></div>
<div class="t " style="left:1658.00px;top:484px;font-size:12px;color:#222;font-weight:bold;letter-spacing:-0.244px;">Ship Order</div>
<svg class="r" style="left:1886.5px;top:487.5px;" width="7.5" height="11.5" viewBox="0 0 7.5 11.5"><path d="M1 1 L6 5.75 L1 10.5" fill="none" stroke="#8c8c8c" stroke-width="1.5"/></svg>
<div class="r" style="left:1657px;top:509px;width:246px;height:1px;background:#e6e6e6;"></div>
<div class="t " style="left:1658.00px;top:515px;font-size:12px;color:#222;font-weight:bold;letter-spacing:-0.092px;">Invoice</div>
<svg class="r" style="left:1886.5px;top:518.5px;" width="7.5" height="11.5" viewBox="0 0 7.5 11.5"><path d="M1 1 L6 5.75 L1 10.5" fill="none" stroke="#8c8c8c" stroke-width="1.5"/></svg>
<div class="r" style="left:1657px;top:540px;width:246px;height:1px;background:#e6e6e6;"></div>
<div class="t " style="left:1658.00px;top:546px;font-size:12px;color:#222;font-weight:bold;letter-spacing:-0.250px;">Customer Credit</div>
<svg class="r" style="left:1886.5px;top:549.5px;" width="7.5" height="11.5" viewBox="0 0 7.5 11.5"><path d="M1 1 L6 5.75 L1 10.5" fill="none" stroke="#8c8c8c" stroke-width="1.5"/></svg>
<div class="r" style="left:1657px;top:571px;width:246px;height:1px;background:#e6e6e6;"></div>
<div class="t " style="left:1658.00px;top:577px;font-size:12px;color:#222;font-weight:bold;letter-spacing:-0.183px;">Payment</div>
<svg class="r" style="left:1886.5px;top:580.5px;" width="7.5" height="11.5" viewBox="0 0 7.5 11.5"><path d="M1 1 L6 5.75 L1 10.5" fill="none" stroke="#8c8c8c" stroke-width="1.5"/></svg>
<div class="r" style="left:1657px;top:602px;width:246px;height:1px;background:#e6e6e6;"></div>
<div class="r" style="left:1641px;top:801px;width:277px;height:1.5px;background:#e6e6e6;"></div>
<div class="r" style="left:1657px;top:816px;width:60px;height:26px;background:#eeeeee;border-radius:2px"></div>
<div class="t " style="left:1671.50px;top:820px;font-size:12px;color:#1a5f97;font-weight:normal;transform:scaleX(0.8824);transform-origin:0 0;">CARD</div>
<div class="r" style="left:1721px;top:816px;width:58px;height:26px;background:#eeeeee;border-radius:2px"></div>
<div class="t " style="left:1731.50px;top:820px;font-size:12px;color:#1a5f97;font-weight:normal;transform:scaleX(0.8881);transform-origin:0 0;">CHECK</div>
<div class="r" style="left:1782px;top:816px;width:58px;height:26px;background:#eeeeee;border-radius:2px"></div>
<div class="t " style="left:1796.50px;top:820px;font-size:12px;color:#1a5f97;font-weight:normal;transform:scaleX(0.8996);transform-origin:0 0;">CASH</div>
<div class="r" style="left:1843px;top:816px;width:60px;height:26px;background:#eeeeee;border-radius:2px"></div>
<div class="t " style="left:1859.50px;top:820px;font-size:12px;color:#1a5f97;font-weight:normal;transform:scaleX(0.8306);transform-origin:0 0;">CRDT</div>
<div class="r" style="left:1641px;top:854px;width:277px;height:1.5px;background:#e6e6e6;"></div>
<div class="t " style="left:1649.10px;top:861px;font-size:12px;color:#222;font-weight:bold;letter-spacing:-0.405px;">Open Balance</div>
<div class="t " style="left:1649.10px;top:876px;font-size:12px;color:#222;font-weight:normal;letter-spacing:-0.331px;">SubTotal:</div>
<div class="t " style="left:1872.50px;top:876px;font-size:11px;color:#333;font-weight:normal;letter-spacing:-0.292px;">$100.00</div>
<div class="t " style="left:1649.10px;top:891px;font-size:12px;color:#222;font-weight:normal;letter-spacing:-0.062px;">Discount:</div>
<div class="t " style="left:1899.00px;top:891px;font-size:11px;color:#333;font-weight:normal;letter-spacing:-0.750px;">$0</div>
<div class="t " style="left:1649.10px;top:906px;font-size:12px;color:#222;font-weight:normal;transform:scaleX(0.8773);transform-origin:0 0;">Tax:</div>
<div class="t " style="left:1884.40px;top:906px;font-size:11px;color:#333;font-weight:normal;letter-spacing:-0.363px;">$9.80</div>
<div class="t " style="left:1649.10px;top:921px;font-size:12px;color:#222;font-weight:bold;letter-spacing:-0.370px;">Total:</div>
<div class="t " style="left:1866.40px;top:921px;font-size:12px;color:#222;font-weight:bold;letter-spacing:0.117px;">$109.80</div>
<div class="t " style="left:1649.10px;top:936px;font-size:12px;color:#1a5f97;font-weight:normal;letter-spacing:-0.212px;">Currency:</div>
<div class="r" style="left:1649px;top:961px;width:262px;height:1px;background:#e4e4e4;"></div>
<div class="t " style="left:1657.60px;top:976px;font-size:12px;color:#222;font-weight:bold;letter-spacing:-0.443px;">Payments</div>
<div class="t " style="left:1889.60px;top:976px;font-size:12px;color:#222;font-weight:bold;letter-spacing:-0.550px;">$0</div>
<div class="t " style="left:1657.60px;top:991px;font-size:12px;color:#222;font-weight:bold;letter-spacing:-0.335px;">Total Applied:</div>
<div class="t " style="left:1872.50px;top:991px;font-size:12px;color:#222;font-weight:bold;letter-spacing:-0.037px;">$0.00</div>
<div class="t " style="left:1657.60px;top:1006px;font-size:12px;color:#222;font-weight:bold;letter-spacing:-0.215px;">Amount Due:</div>
<div class="t " style="left:1858.70px;top:1006px;font-size:12px;color:#e8141e;font-weight:bold;letter-spacing:0.050px;">$109.80</div>
<div class="r" style="left:1641px;top:1038px;width:278px;height:1px;background:#e2e2e2;"></div>
</body></html>
